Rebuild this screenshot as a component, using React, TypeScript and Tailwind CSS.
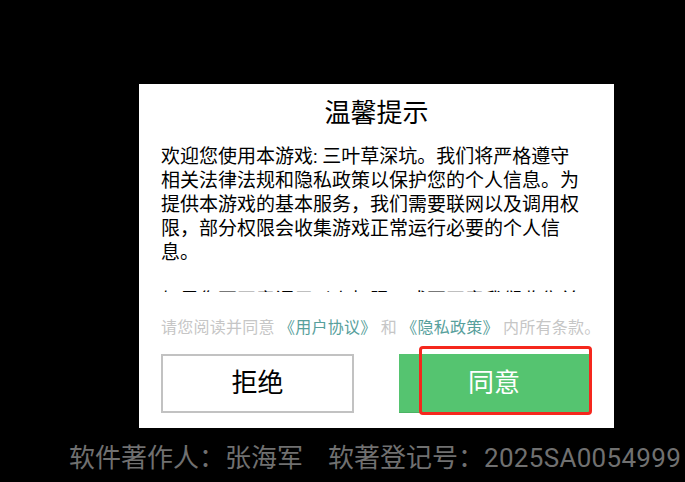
import React from "react";

const cjk = { fontFamily: 'Roboto, "Noto Sans CJK SC", sans-serif' };

export default function App() {
  return (
    <div className="w-[685px] h-[482px] bg-black overflow-hidden flex flex-col" style={cjk}>
      <div className="pt-[84px] pl-[139px]">
        <div className="w-[475px] h-[344px] bg-white flex flex-col">
          <div className="pt-[11px] h-[47px] text-center text-[26px] leading-[36px] text-black">温馨提示</div>
          <div className="mt-[14px] h-[147px] overflow-hidden pl-[22px] text-[19px] leading-[24px] text-black">
            <div className="w-[423px]">
              <p>欢迎您使用本游戏: 三叶草深坑。我们将严格遵守相关法律法规和隐私政策以保护您的个人信息。为提供本游戏的基本服务，我们需要联网以及调用权限，部分权限会收集游戏正常运行必要的个人信息。</p>
              <p className="h-[24px]"></p>
              <p>如果您不同意调用以上权限，或不同意我们收集并使用您的个人信息，您可以选择拒绝。</p>
            </div>
          </div>
          <div className="mt-[26px] h-[20px] px-[22px] text-[16px] tracking-[0.25px] leading-[20px] text-[#c6c6c6] whitespace-nowrap">
            请您阅读并同意 <span className="text-[#58a09c]">《用户协议》</span> 和 <span className="text-[#58a09c]">《隐私政策》</span> 内所有条款。
          </div>
          <div className="mt-[16px] flex px-[22px] gap-[45px]">
            <div className="w-[193px] h-[59px] border-2 border-[#c2c2c2] flex items-center justify-center text-[26px] text-black">拒绝</div>
            <div className="relative w-[190px] h-[59px] bg-[#55c470] border-b border-[#4bb364] flex items-center justify-center text-[26px] text-white">
              同意
              <div className="absolute left-[20px] top-[-8px] w-[173px] h-[69px] border-[3px] border-[#f5271d] rounded-[4px]"></div>
            </div>
          </div>
        </div>
      </div>
      <div className="mt-[14px] pl-[69px] h-[32px] text-[26px] leading-[32px] text-[#707070] whitespace-nowrap flex">
        <span>软件著作人：张海军</span>
        <span className="ml-[25px]">软著登记号：</span>
        <span className="tracking-[0.3px]">2025SA0054999</span>
      </div>
    </div>
  );
}
